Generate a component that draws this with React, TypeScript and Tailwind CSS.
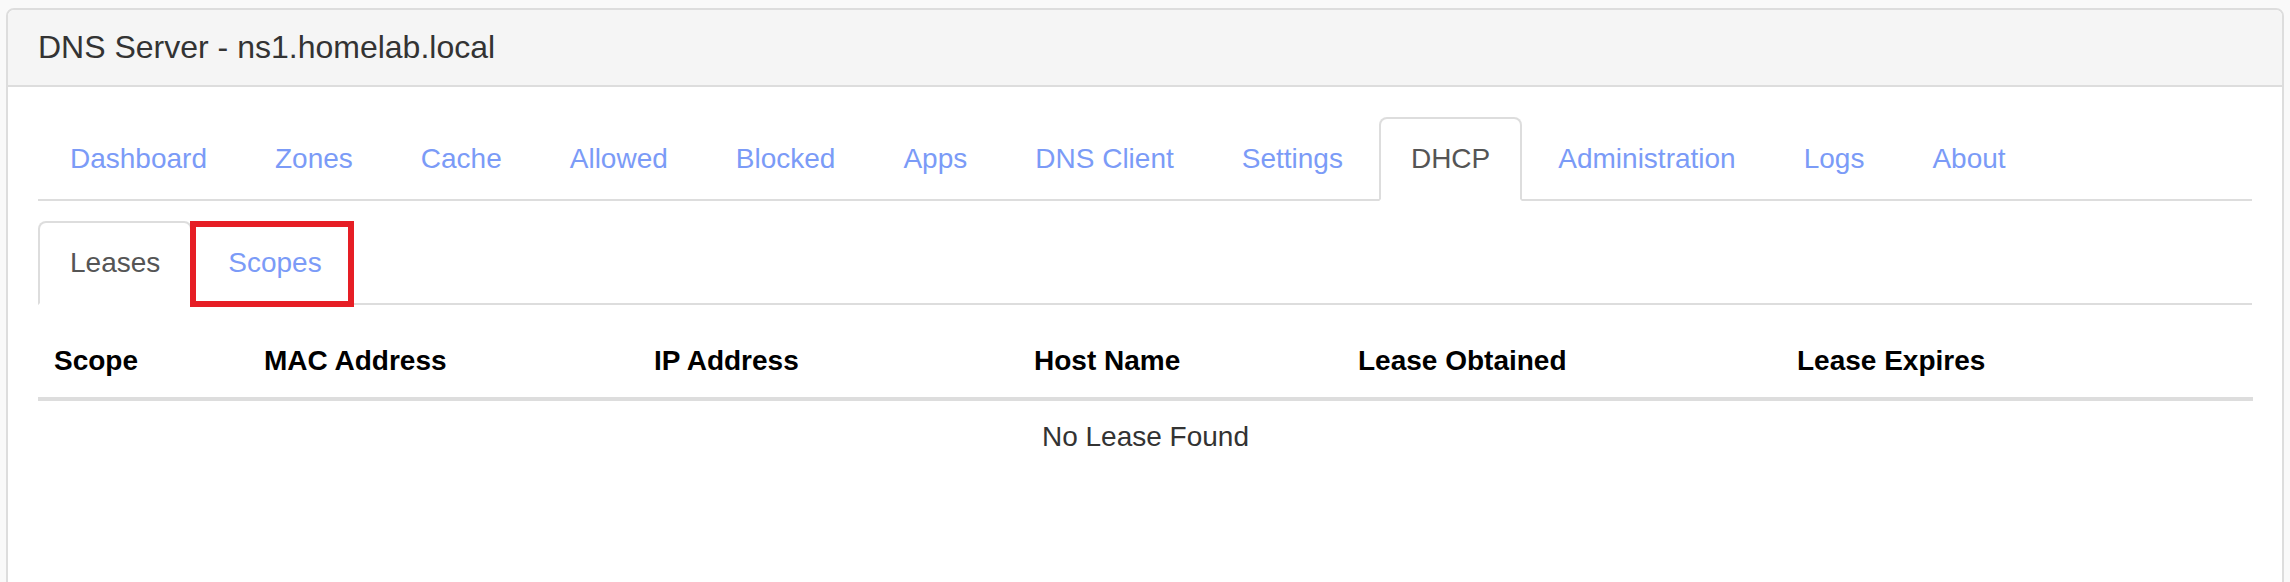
import React from "react";

const mainTabs = [
  "Dashboard",
  "Zones",
  "Cache",
  "Allowed",
  "Blocked",
  "Apps",
  "DNS Client",
  "Settings",
  "DHCP",
  "Administration",
  "Logs",
  "About",
];

function Tab({ label, active, annotated }: { label: string; active?: boolean; annotated?: boolean }) {
  return (
    <li className="relative -mb-[2px] mr-[4px]">
      <a
        className={
          active
            ? "block px-[30px] py-[20px] text-[28px] leading-[40px] border-2 border-[#ddd] border-b-transparent rounded-t-[8px] bg-white text-[#555]"
            : "block px-[30px] py-[20px] text-[28px] leading-[40px] border-2 border-transparent rounded-t-[8px] text-[#7b9bf7]"
        }
      >
        {label}
      </a>
      {annotated && (
        <span className="pointer-events-none absolute -left-[6px] top-0 right-0 -bottom-[2px] border-[6px] border-[#e61e25]" />
      )}
    </li>
  );
}

export default function App() {
  const cols = [210, 390, 380, 324, 439, 472];
  const heads = ["Scope", "MAC Address", "IP Address", "Host Name", "Lease Obtained", "Lease Expires"];
  return (
    <div
      className="min-h-screen bg-[#f9f9f9] pt-[8px] px-[6px]"
      style={{ fontFamily: '"Liberation Sans", Arial, sans-serif' }}
    >
      <div className="border-2 border-[#ddd] rounded-[8px] bg-white h-[700px]">
        <div className="bg-[#f5f5f5] border-b-2 border-[#ddd] rounded-t-[6px] px-[30px] py-[20px]">
          <h3 className="text-[32px] leading-[35px] text-[#333]">DNS Server - ns1.homelab.local</h3>
        </div>
        <div className="p-[30px]">
          <ul className="flex border-b-2 border-[#ddd]">
            {mainTabs.map((t) => (
              <Tab key={t} label={t} active={t === "DHCP"} />
            ))}
          </ul>
          <ul className="flex border-b-2 border-[#ddd] mt-[20px]">
            <Tab label="Leases" active />
            <Tab label="Scopes" annotated />
          </ul>
          <table className="mt-[20px] w-full table-fixed border-collapse text-[28px] leading-[40px]">
            <colgroup>
              {cols.map((w, i) => (
                <col key={i} style={{ width: w }} />
              ))}
            </colgroup>
            <thead>
              <tr>
                {heads.map((h) => (
                  <th key={h} className="text-left font-bold text-black p-[16px] border-b-4 border-[#ddd]">
                    {h}
                  </th>
                ))}
              </tr>
            </thead>
            <tbody>
              <tr>
                <td colSpan={6} className="text-center text-[#333] p-[16px]">
                  No Lease Found
                </td>
              </tr>
            </tbody>
          </table>
        </div>
      </div>
    </div>
  );
}
